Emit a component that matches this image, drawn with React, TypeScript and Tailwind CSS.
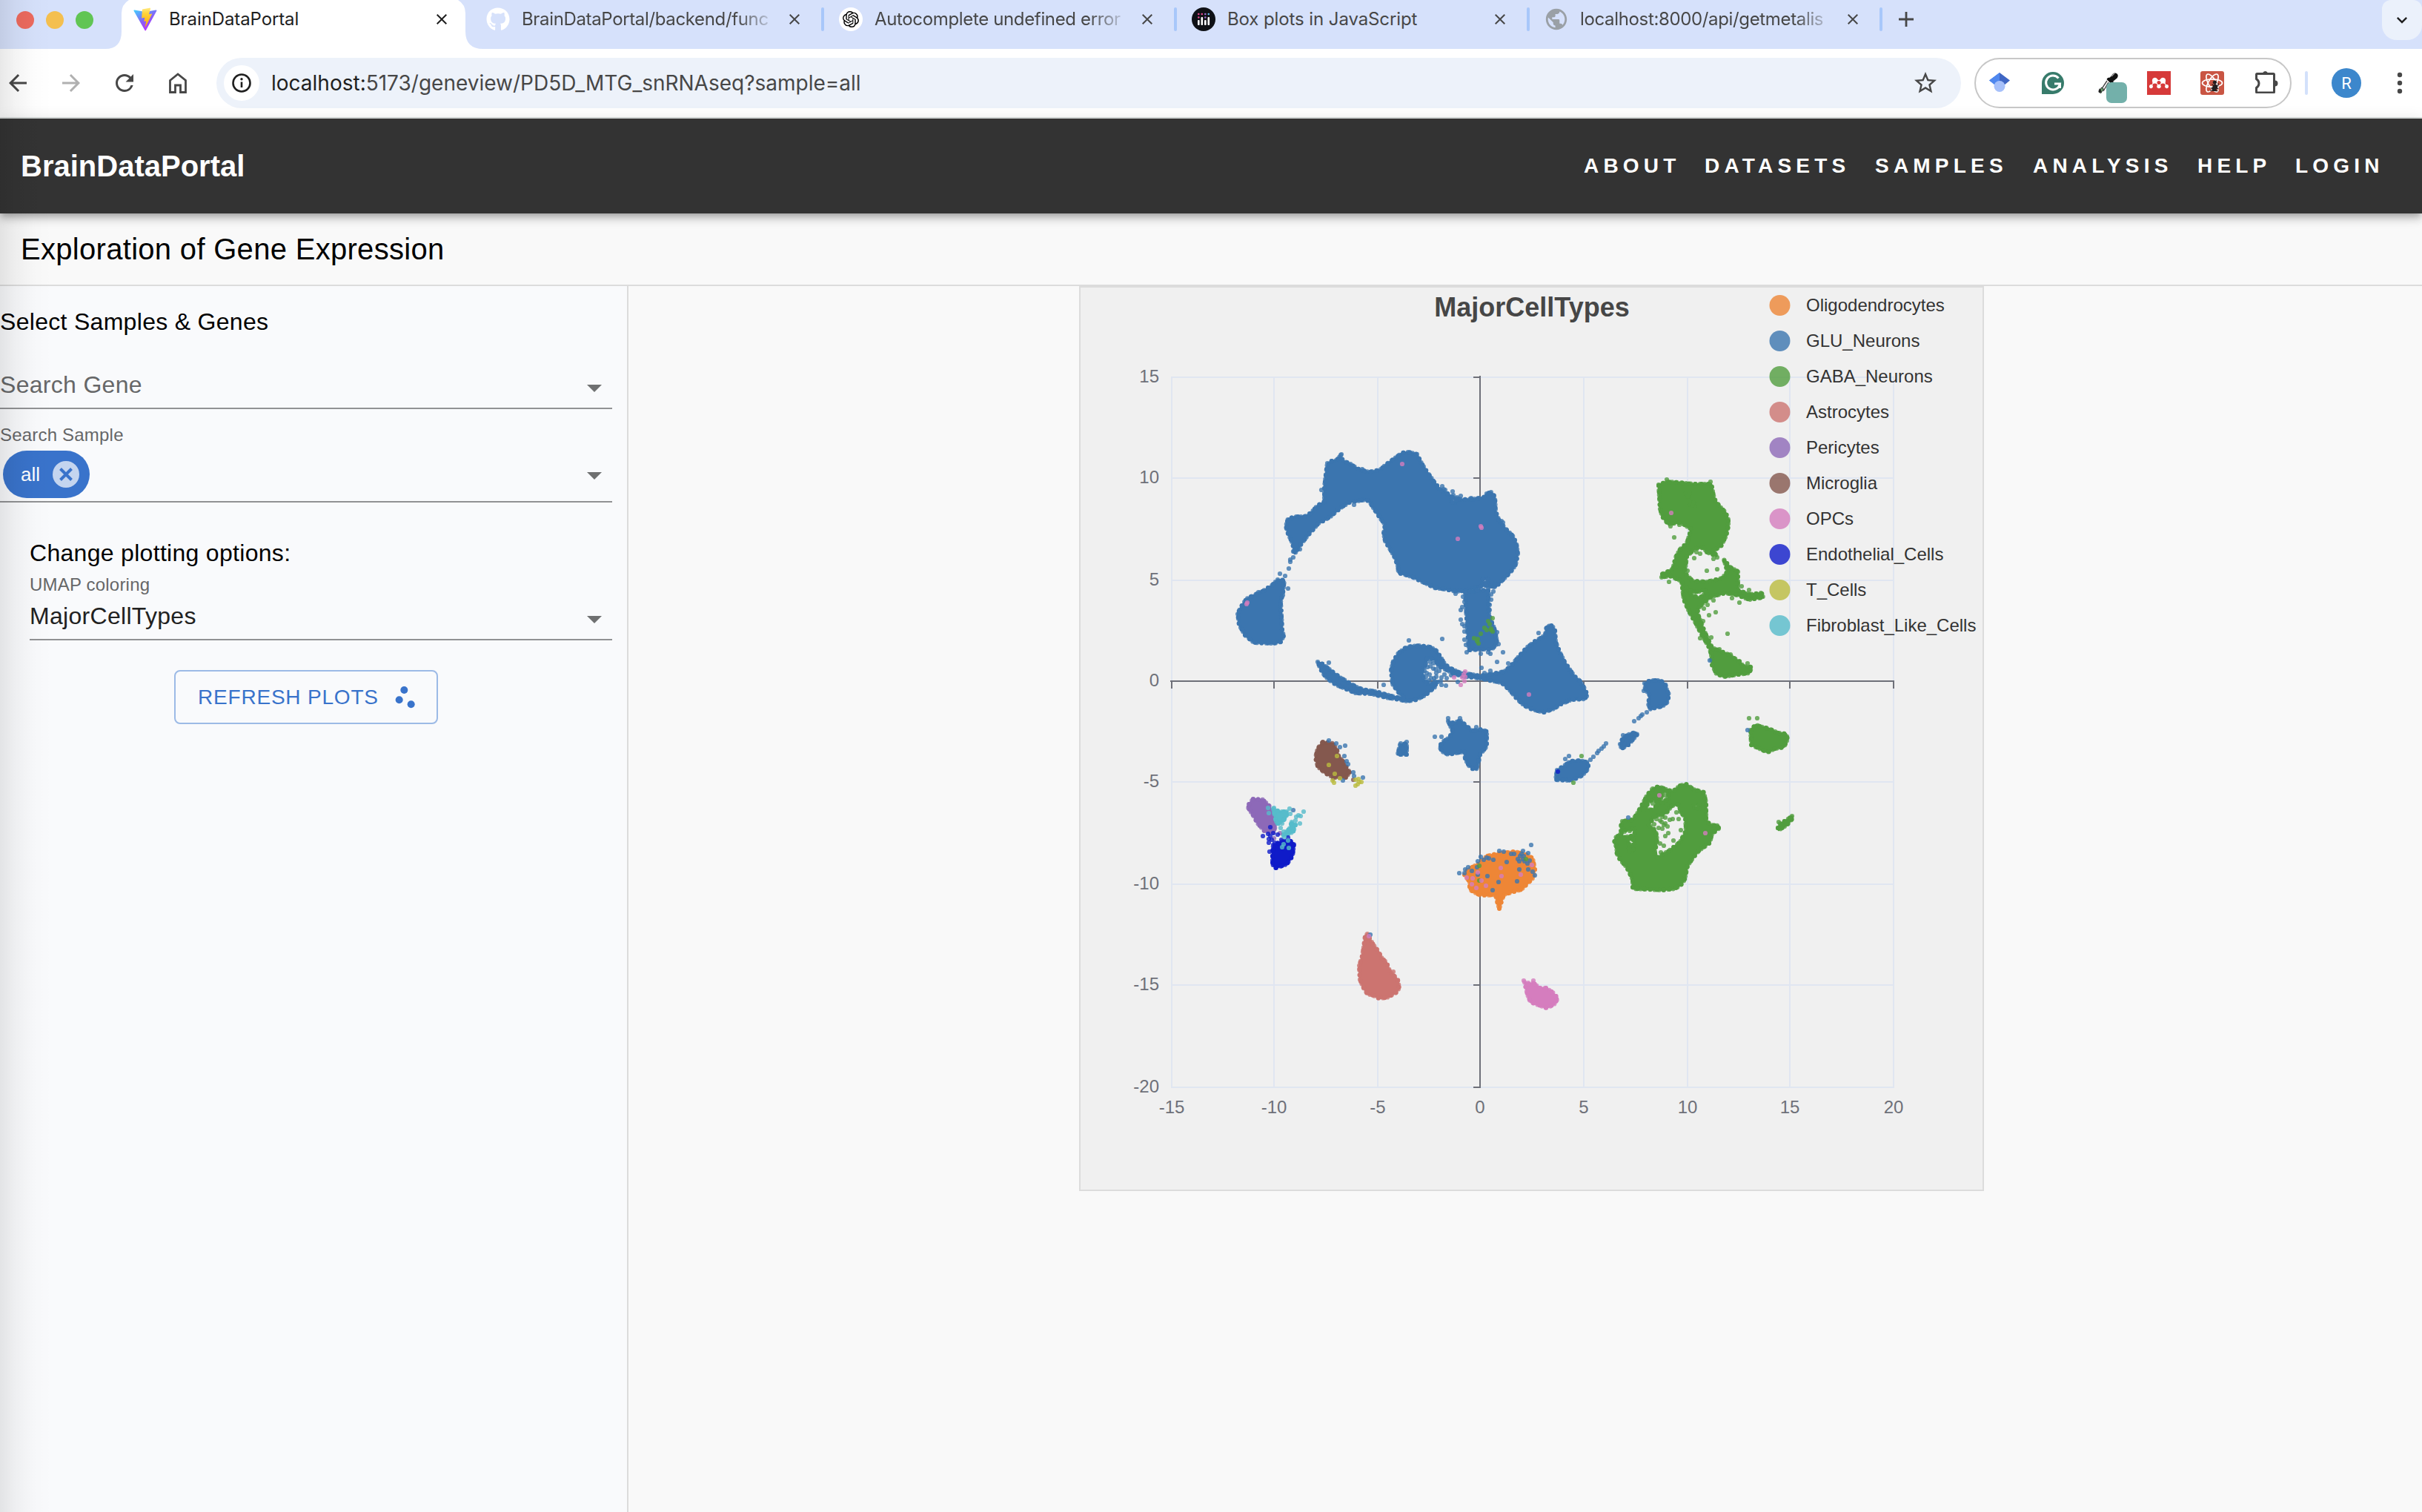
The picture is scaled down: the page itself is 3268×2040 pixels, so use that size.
import type { ReactNode } from "react";
import {
  MdArrowBack,
  MdArrowForward,
  MdClose,
  MdExpandMore,
  MdPublic,
  MdRefresh,
  MdScatterPlot,
  MdStarBorder,
} from "react-icons/md";
import { FaGithub } from "react-icons/fa";
import { SiMendeley, SiOpenai } from "react-icons/si";

/* ---------------------------------------------------------------- browser */

function ViteLogo() {
  return (
    <svg viewBox="0 0 32 32" className="h-8 w-8">
      <defs>
        <linearGradient id="vite-a" x1="0" y1="0" x2="0.6" y2="1">
          <stop offset="0" stopColor="#41d1ff" />
          <stop offset="0.6" stopColor="#8a5cf6" />
          <stop offset="1" stopColor="#bd34fe" />
        </linearGradient>
        <linearGradient id="vite-b" x1="0" y1="0" x2="0" y2="1">
          <stop offset="0" stopColor="#ffea83" />
          <stop offset="0.3" stopColor="#ffd33b" />
          <stop offset="1" stopColor="#ffa800" />
        </linearGradient>
      </defs>
      <path d="M31.3 4.7 16.9 31a.8.8 0 0 1-1.4 0L.6 4.7a.8.8 0 0 1 .9-1.2L16 6.1l14.4-2.6a.8.8 0 0 1 .9 1.2Z" fill="url(#vite-a)" />
      <path d="m22.9.5-10.600 2.100a.5.5 0 0 0-.4.400l-.7 11a.5.5 0 0 0 .6.4l3-.7c.3 0 .5.200.5.500l-.9 4.300c-.1.300.200.500.500.500l1.800-.600c.3 0 .5.200.5.500l-1.400 6.800c-.1.400.5.700.700.300l8.500-16.800c.1-.300-.100-.600-.400-.600l-3.100.600c-.3 0-.5-.200-.4-.500l2-7.300c0-.300-.200-.600-.5-.500Z" fill="url(#vite-b)" />
    </svg>
  );
}

function PlotlyLogo() {
  return (
    <svg viewBox="0 0 32 32" className="h-8 w-8">
      <circle cx="16" cy="16" r="16" fill="#0f1116" />
      <g fill="#fff">
        <rect x="8" y="17" width="2.600" height="7" rx="1" />
        <rect x="12.500" y="13" width="2.600" height="11" rx="1" />
        <rect x="17" y="17" width="2.600" height="7" rx="1" />
        <rect x="21.500" y="13" width="2.600" height="11" rx="1" />
      </g>
      <g fill="#e5478f">
        <circle cx="9.300" cy="9" r="1.300" />
        <circle cx="9.300" cy="13.500" r="1.300" />
        <circle cx="13.800" cy="9" r="1.300" />
      </g>
      <circle cx="18.300" cy="9" r="1.300" fill="#9a6bd0" />
      <circle cx="18.300" cy="13.500" r="1.300" fill="#9a6bd0" />
      <circle cx="22.800" cy="9" r="1.300" fill="#5fb8e8" />
    </svg>
  );
}

const tabs: { title: string; icon: ReactNode; active?: boolean; fade?: boolean }[] = [
  { title: "BrainDataPortal", icon: <ViteLogo />, active: true },
  { title: "BrainDataPortal/backend/func", icon: <FaGithub className="h-8 w-8 text-white" />, fade: true },
  {
    title: "Autocomplete undefined error",
    icon: (
      <span className="flex h-8 w-8 items-center justify-center rounded-full bg-white">
        <SiOpenai className="h-[22px] w-[22px] text-black" />
      </span>
    ),
    fade: true,
  },
  { title: "Box plots in JavaScript", icon: <PlotlyLogo /> },
  {
    title: "localhost:8000/api/getmetalis",
    icon: <MdPublic className="-ml-px h-[34px] w-[34px] shrink-0 text-[#9aa0a6]" />,
    fade: true,
  },
];

function TabStrip() {
  return (
    <div className="relative flex h-[66px] items-start bg-[#d6e1fb]">
      <svg className="absolute left-0 top-0 h-[66px] w-[700px]" viewBox="0 0 700 66">
        <path d="M142 66Q164 66 164 42V18Q164 6 174 0H618Q628 6 628 18V42Q628 66 652 66Z" fill="#fff" />
      </svg>
      <div className="relative flex h-[54px] w-[164px] items-center gap-4 pl-[22px]">
        <span className="h-6 w-6 rounded-full bg-[#ec6a5e]" />
        <span className="h-6 w-6 rounded-full bg-[#f4bf4f]" />
        <span className="h-6 w-6 rounded-full bg-[#61c554]" />
      </div>
      {tabs.map((t) => (
        <div key={t.title} className="relative flex h-[52px] w-[476px] items-center pl-4">
          <span className="flex w-8 shrink-0 items-center justify-center">{t.icon}</span>
          <span
            className={
              "ml-4 w-[336px] overflow-hidden whitespace-nowrap font-['Inter'] text-[24px] leading-[32px] tracking-[-0.1px] " +
              (t.active ? "text-[#1f1f1f] " : "text-[#474747] ") +
              (t.fade ? "tracking-[-0.35px] [mask-image:linear-gradient(to_right,black_290px,transparent_344px)]" : "")
            }
          >
            {t.title}
          </span>
          <MdClose className={"ml-5 h-6 w-6 shrink-0 " + (t.active ? "text-[#1f1f1f]" : "text-[#474747]")} />
          {!t.active && <span className="ml-auto mr-1 h-8 w-1 rounded-full bg-[#a8c7fa]" />}
        </div>
      ))}
      <svg viewBox="0 0 20 20" className="ml-[18px] mt-4 h-5 w-5">
        <path d="M10 0V20M0 10H20" stroke="#474747" strokeWidth="2.800" />
      </svg>
      <div className="ml-auto flex h-[54px] w-[54px] items-center justify-center rounded-b-[20px] rounded-t-[12px] bg-[#ebf1fb]">
        <MdExpandMore className="h-7 w-7 text-[#1f1f1f]" />
      </div>
    </div>
  );
}

function HomeIcon() {
  return (
    <svg viewBox="0 0 24 28" className="h-7 w-6" fill="none" stroke="#474747" strokeWidth="2.800">
      <path d="M1.500 10.500 12 2l10.500 8.500V26.500H15.500V17H8.500v9.500h-7Z" />
    </svg>
  );
}

function Extensions() {
  return (
    <div className="flex h-[68px] w-[428px] shrink-0 items-center rounded-full border-2 border-[#c7c7c7] bg-white">
      <svg viewBox="0 0 28 28" className="ml-[18px] h-7 w-7 shrink-0">
        <path d="M0 10.500 14 0v15L3 12.500Z" fill="#4f87ee" />
        <path d="M0 10.500 14 0v22Z" fill="#4f87ee" />
        <path d="M28 10.500 14 0v22Z" fill="#3f66c4" />
        <circle cx="14" cy="18.500" r="7.500" fill="#a6c0fa" />
      </svg>
      <svg viewBox="0 0 30 30" className="ml-[43px] h-[30px] w-[30px] shrink-0">
        <path d="M0 30V15A15 15 0 1 1 15 30Z" fill="#377b6b" />
        <path d="M22.500 8.500A9.500 9.500 0 1 0 24.500 16H17M24.500 15.500V22" fill="none" stroke="#fff" strokeWidth="3" />
      </svg>
      <svg viewBox="0 0 40 44" className="ml-[46px] mt-[12px] h-11 w-10 shrink-0">
        <path d="M12 13 4 25l-2 4M14 15 7 27" fill="none" stroke="#444" strokeWidth="1.400" />
        <path d="m4.500 22-3 6 2 2 4-6Z" fill="#6da36f" stroke="#111" strokeWidth=".8" />
        <path d="M13 9l3-.5 4-5q3-2 5.500 0t0 6l-5 4v3l-3 .5-6-6Z" fill="#111" />
        <path d="m18 7 4-4" stroke="#aaa" strokeWidth="1.200" />
        <rect x="11" y="15" width="28" height="28" rx="7" fill="#73b0aa" />
        <path d="M2 23q-3 6 0 6t2-3Z" fill="#222" />
      </svg>
      <span className="ml-[26px] flex h-8 w-8 shrink-0 items-center justify-center bg-[#d63a3a]">
        <SiMendeley className="h-[26px] w-[26px] text-white" />
      </span>
      <svg viewBox="0 0 32 32" className="ml-10 h-8 w-8 shrink-0">
        <rect width="32" height="32" rx="3" fill="#c95543" />
        <g fill="none" stroke="#fff" strokeWidth="1.700">
          <ellipse cx="16" cy="16" rx="13.500" ry="5.200" />
          <ellipse cx="16" cy="16" rx="13.500" ry="5.200" transform="rotate(60 16 16)" />
          <ellipse cx="16" cy="16" rx="13.500" ry="5.200" transform="rotate(120 16 16)" />
        </g>
        <g transform="rotate(25 20 21)" fill="#231f20" stroke="#231f20" strokeWidth="1.200">
          <ellipse cx="20" cy="22.500" rx="2.800" ry="4.200" />
          <circle cx="17" cy="16" r="2" />
          <path d="M14.500 20l11 2M15 25h10.500M16 28.500l8-3M22 15l1 4" />
        </g>
      </svg>
      <svg viewBox="0 0 32 32" className="-mt-1 ml-[41px] h-8 w-8 shrink-0">
        <path
          d="M2.500 6.500Q2.500 5.500 3.500 5.500H25.500Q26.500 5.500 26.500 6.500V30Q26.500 31 25.500 31H3.500Q2.500 31 2.500 30V24.500Q6 22 6 18.500T2.500 12.500Z"
          fill="none"
          stroke="#474747"
          strokeWidth="3"
        />
        <path d="M11 4.500a3.700 3.700 0 0 1 7 0ZM27.500 14.500a3.900 3.900 0 0 1 0 8Z" fill="#474747" />
      </svg>
    </div>
  );
}

function Toolbar() {
  return (
    <div className="flex h-[94px] items-center border-b-2 border-[#dde1e0] bg-white">
      <MdArrowBack className="ml-[6px] h-9 w-9 text-[#474747]" />
      <MdArrowForward className="ml-9 h-9 w-9 text-[#b0b0b0]" />
      <MdRefresh className="ml-9 h-9 w-9 text-[#474747]" />
      <span className="ml-[42px]">
        <HomeIcon />
      </span>
      <div className="ml-10 flex h-[68px] w-[2354px] shrink-0 items-center rounded-full bg-[#edf2fa] pl-[10px]">
        <span className="flex h-12 w-12 items-center justify-center rounded-full bg-white">
          <svg viewBox="0 0 26 26" className="h-[26px] w-[26px]">
            <circle cx="13" cy="13" r="11.500" fill="none" stroke="#1f1f1f" strokeWidth="2.600" />
            <path d="M13 11.500V19" stroke="#1f1f1f" strokeWidth="2.600" />
            <circle cx="13" cy="7.800" r="1.700" fill="#1f1f1f" />
          </svg>
        </span>
        <span className="ml-4 whitespace-nowrap font-['Inter'] text-[28px] leading-[40px] text-[#474747]">
          <span className="text-[#1f1f1f]">localhost:</span>5173/geneview/PD5D_MTG_snRNAseq?sample=all
        </span>
        <MdStarBorder className="ml-auto mr-[30px] h-9 w-9 text-[#474747]" />
      </div>
      <div className="ml-[18px]">
        <Extensions />
      </div>
      <span className="ml-[18px] h-8 w-1 rounded-full bg-[#d3e1fb]" />
      <span className="ml-8 flex h-10 w-10 items-center justify-center rounded-full bg-[#3c87cc] font-['Roboto'] text-[22px] text-white">
        R
      </span>
      <svg viewBox="0 0 8 30" className="ml-12 h-[30px] w-2" fill="#474747">
        <circle cx="4" cy="4" r="3.200" />
        <circle cx="4" cy="15" r="3.200" />
        <circle cx="4" cy="26" r="3.200" />
      </svg>
    </div>
  );
}

/* -------------------------------------------------------------------- app */

function NavBar() {
  return (
    <header className="relative z-10 flex h-32 items-center bg-[#333333] pl-7 text-white shadow-[0_4px_8px_-2px_rgba(0,0,0,0.2),0_8px_10px_rgba(0,0,0,0.14),0_2px_20px_rgba(0,0,0,0.12)]">
      <span className="text-[40px] font-bold">BrainDataPortal</span>
      <nav className="ml-auto flex text-[28px] font-bold tracking-[6.200px]">
        <a className="w-[163px]">ABOUT</a>
        <a className="w-[230px]">DATASETS</a>
        <a className="w-[213px]">SAMPLES</a>
        <a className="w-[222px]">ANALYSIS</a>
        <a className="w-[132px]">HELP</a>
        <a className="w-[171px]">LOGIN</a>
      </nav>
    </header>
  );
}

function Caret({ className }: { className: string }) {
  return (
    <svg viewBox="0 0 20 10" className={"ml-auto mr-[14px] h-[10px] w-5 shrink-0 " + className}>
      <path d="M0 0H20L10 10Z" fill="#6f7071" />
    </svg>
  );
}

function Sidebar() {
  return (
    <aside className="flex w-[848px] shrink-0 flex-col border-r-2 border-[#dcdcdc] bg-[#f9fafc] pr-5">
      <h2 className="mt-5 h-14 text-[32px] leading-[56px] tracking-[0.3px] text-black">Select Samples &amp; Genes</h2>
      <div className="flex h-[90px] items-end border-b-2 border-[#919294]">
        <span className="text-[32px] leading-[62px] tracking-[0.3px] text-[#666768]">Search Gene</span>
        <Caret className="mb-[21px]" />
      </div>
      <div className="border-b-2 border-[#919294] pb-1 pt-[17px]">
        <div className="text-[24px] leading-9 tracking-[0.2px] text-[#666768]">Search Sample</div>
        <div className="mt-[3px] flex h-16 items-center pl-1">
          <span className="flex h-16 w-[117px] items-center rounded-full bg-[#3973cb] pl-6 text-[26px] text-white">
            all
            <span className="ml-auto mr-[14px] flex h-9 w-9 items-center justify-center rounded-full bg-[#c4d5ef]">
              <svg viewBox="0 0 18 18" className="h-[18px] w-[18px]">
                <path d="M1.500 1.500l15 15M16.500 1.500l-15 15" stroke="#3973cb" strokeWidth="4" />
              </svg>
            </span>
          </span>
          <Caret className="mt-[3px]" />
        </div>
      </div>
      <div className="ml-10 flex flex-col">
        <h3 className="mt-11 h-12 text-[32px] leading-[48px] tracking-[0.3px] text-black">Change plotting options:</h3>
        <div className="mt-px text-[24px] leading-9 tracking-[0.2px] text-[#666768]">UMAP coloring</div>
        <div className="flex h-[57px] items-start border-b-2 border-[#919294] text-[32px] leading-[48px] tracking-[0.3px] text-[#212121]">
          MajorCellTypes
          <Caret className="mt-6" />
        </div>
      </div>
      <button className="ml-[235px] mt-10 flex h-[73px] w-[356px] items-center rounded-lg border-2 border-[#9cbae6] pl-[30px] text-[28px] tracking-[0.02857em] text-[#3973cb]">
        REFRESH PLOTS
        <MdScatterPlot className="ml-auto mr-[22px] h-10 w-10" />
      </button>
    </aside>
  );
}

/* ------------------------------------------------------------------ chart */

const C = {
  oligo: "#ee8636",
  glu: "#3b75af",
  gaba: "#519d3e",
  astro: "#cc7470",
  peri: "#8d69b8",
  micro: "#84584e",
  opc: "#d57dbe",
  endo: "#0f1bc9",
  tcell: "#babc3f",
  fibro: "#56bccb",
};

const legend = [
  ["Oligodendrocytes", C.oligo],
  ["GLU_Neurons", C.glu],
  ["GABA_Neurons", C.gaba],
  ["Astrocytes", C.astro],
  ["Pericytes", C.peri],
  ["Microglia", C.micro],
  ["OPCs", C.opc],
  ["Endothelial_Cells", C.endo],
  ["T_Cells", C.tcell],
  ["Fibroblast_Like_Cells", C.fibro],
];

/* Dense cell clusters: outline rings (inner rings are gaps in the cloud). */
const regions: { color: string; d: string }[] = [
  {
    color: C.glu,
    d: "M1791 625L1797 622 1803 621 1808 616 1813 622 1822 626 1833 633 1847 637 1862 634 1870 627 1885 616 1892 611 1901 610 1912 613 1918 625 1925 636 1932 646 1942 660 1953 666 1962 672 1973 674 1990 673 2002 671 2006 666 2012 664 2017 670 2018 690 2023 703 2032 714 2041 723 2046 733 2048 747 2045 762 2038 772 2027 783 2018 792 2004 790 1990 793 1975 797 1965 798 1950 795 1935 793 1926 788 1917 784 1905 778 1895 775 1887 773 1886 763 1881 750 1875 740 1869 730 1867 720 1869 708 1863 700 1853 685 1848 677 1843 674 1832 676 1822 677 1812 683 1803 690 1795 697 1787 702 1779 706 1773 713 1764 723 1755 735 1747 747 1744 733 1738 720 1735 710 1738 700 1748 697 1760 697 1769 692 1778 682 1787 677 1787 657 1789 640Z M1959 673l6 1-1 5-6-2Z M2001 781l8 1-4 5-5-1Z",
  },
  { color: C.glu, d: "M1724 782L1733 783 1731 800 1728 812 1729 830 1730 850 1732 858 1728 866 1718 868 1692 867 1680 857 1672 843 1670 828 1675 818 1682 808 1690 804 1703 798 1716 790Z" },
  { color: C.glu, d: "M1977 798L2008 796 2009 830 2017 850 2020 868 2013 876 1998 876 1982 877 1980 850 1978 820Z M1990 794h4v3h-4Z" },
  {
    color: C.glu,
    d: "M1778 893L1785 896 1796 905 1808 914 1820 921 1832 928 1843 931 1856 933 1870 937 1885 941 1894 941 1887 934 1879 923 1877 904 1880 892 1887 881 1898 873 1914 871 1930 873 1938 878 1944 887 1950 897 1958 902 1968 907 1980 909 1997 912 2015 909 2030 906 2040 897 2050 885 2060 874 2070 866 2085 857 2087 845 2094 844 2098 850 2099 866 2105 881 2111 893 2124 912 2132 919 2138 929 2142 938 2138 943 2120 944 2106 950 2097 956 2083 961 2067 957 2057 952 2047 943 2037 931 2026 921 2010 918 1997 915 1977 913 1962 909 1950 903 1942 899 1936 890 1926 887 1924 896 1919 905 1921 917 1930 924 1938 921 1936 927 1923 938 1911 944 1899 946 1883 943 1870 941 1850 936 1829 935 1815 929 1803 924 1793 917 1787 911 1782 903Z",
  },
  { color: C.glu, d: "M1954 973L1962 976 1970 972 1977 978 1986 986 1999 984 2006 987 2006 1007 1997 1018 1995 1028 1992 1038 1988 1038 1982 1033 1977 1024 1976 1014 1954 1018 1946 1014 1942 1007 1948 1000 1956 995 1960 986Z" },
  { color: C.glu, d: "M1889 1005L1898 1003 1898 1018 1886 1018Z" },
  { color: C.glu, d: "M2101 1039L2111 1033 2119 1027 2132 1026 2143 1029 2143 1037 2135 1046 2125 1051 2117 1053 2099 1052Z" },
  { color: C.glu, d: "M2186 1004L2190 995 2200 990 2207 988 2209 991 2203 998 2197 1005 2188 1010Z" },
  { color: C.glu, d: "M2219 922L2227 918 2240 918 2247 923 2249 931 2252 937 2250 947 2243 953 2233 955 2227 957 2224 950 2226 938 2220 930Z" },
  {
    color: C.gaba,
    d: "M2238 654L2249 650 2266 651 2284 653 2309 653 2313 673 2320 683 2328 691 2332 701 2332 710 2329 723 2322 737 2312 743 2316 750 2303 745 2299 739 2287 740 2276 751 2273 773 2284 784 2303 785 2324 780 2331 771 2326 755 2334 765 2345 771 2345 796 2360 802 2377 800 2379 806 2360 809 2345 803 2328 800 2309 805 2299 813 2293 819 2290 826 2299 850 2310 874 2330 882 2340 888 2348 893 2352 899 2364 900 2360 908 2345 910 2326 913 2316 909 2310 897 2309 884 2307 875 2296 856 2287 839 2279 825 2272 809 2269 784 2253 777 2242 779 2242 775 2257 768 2261 752 2267 741 2276 733 2282 714 2268 705 2251 707 2243 697 2240 687Z M2276 793L2284 799 2294 798 2302 795 2301 801 2293 807 2283 803Z M2275 665l5-1-2 8Z M2281 681l4-4 2 6Z",
  },
  { color: C.gaba, d: "M2362 985L2369 978 2378 981 2387 983 2399 989 2410 990 2412 997 2407 1008 2395 1010 2385 1015 2372 1009 2363 1005Z" },
  { color: C.gaba, d: "M2402 1111L2410 1107 2418 1101 2419 1104 2411 1113 2400 1120 2399 1117Z" },
  {
    color: C.gaba,
    d: "M2230 1064L2238 1061 2248 1065 2257 1068 2267 1060 2275 1058 2285 1065 2299 1069 2302 1083 2302 1107 2308 1113 2319 1114 2319 1118 2310 1125 2307 1137 2292 1148 2284 1158 2277 1168 2273 1187 2268 1194 2260 1199 2243 1201 2225 1200 2203 1199 2203 1187 2195 1170 2186 1160 2181 1150 2182 1144 2178 1137 2180 1130 2186 1126 2188 1121 2187 1115 2189 1108 2203 1106 2209 1098 2215 1087 2223 1072Z M2225 1113L2232 1102 2248 1097 2256 1087 2266 1085 2267 1095 2274 1103 2275 1121 2267 1136 2252 1148 2234 1158 2233 1149 2236 1133 2234 1121Z M2222 1092L2223 1082 2233 1078 2236 1083 2232 1093Z M2243 1070L2251 1066 2251 1078 2240 1083Z M2187 1121L2205 1118 2206 1127 2190 1130Z M2197 1133l8 0 1 6-8 2Z M2286 1086l7 0 0 5-6-1Z M2198 1145l6 0 0 4-5 0Z",
  },
  { color: C.micro, d: "M1785 1001L1798 1003 1804 1012 1806 1020 1812 1027 1816 1034 1821 1042 1816 1049 1800 1049 1788 1043 1778 1034 1775 1022 1778 1010Z" },
  { color: C.peri, d: "M1691 1078L1704 1079 1713 1088 1718 1100 1722 1112 1718 1123 1707 1122 1697 1111 1691 1100 1683 1088Z" },
  { color: C.endo, d: "M1718 1140L1728 1136 1740 1134 1746 1138 1744 1155 1736 1166 1721 1171 1717 1166 1717 1150Z" },
  { color: C.fibro, d: "M1718 1091L1726 1095 1737 1095 1735 1104 1724 1112 1721 1105Z" },
  { color: C.fibro, d: "M1743 1109L1748 1113 1745 1122 1738 1126 1731 1127 1740 1118Z" },
  { color: C.oligo, d: "M1976 1180L1981 1173 1988 1169 1997 1165 2006 1155 2015 1153 2026 1151 2044 1149 2059 1153 2068 1158 2071 1173 2068 1185 2061 1192 2053 1200 2039 1204 2029 1207 2025 1219 2023 1226 2020 1216 2018 1207 2005 1208 1995 1207 1983 1200 1983 1190Z" },
  { color: C.astro, d: "M1845 1260L1849 1268 1854 1276 1860 1284 1864 1292 1871 1299 1875 1310 1886 1322 1888 1333 1883 1340 1871 1346 1861 1347 1853 1343 1845 1341 1840 1333 1835 1322 1834 1303 1838 1290 1840 1278 1842 1263Z" },
  { color: C.opc, d: "M2057 1325L2062 1328 2069 1326 2077 1333 2086 1333 2095 1339 2102 1347 2097 1355 2087 1360 2076 1356 2065 1352 2061 1342Z" },
];

/* Individual cells, as flat x,y lists. */
const cells: { color: string; at: number[] }[] = [
  {
    color: C.glu,
    at: [
      1901, 864, 1946, 862, 2076, 854, 1727, 774, 1734, 777, 1739, 767, 1741, 758, 1741, 755, 1745, 752, 1738, 794, 1731, 803, 1698, 799,
      1783, 661, 1827, 681, 1838, 633, 1810, 613, 1809, 614, 1971, 823, 1973, 819, 2012, 809, 2010, 816, 1971, 836, 2028, 880, 2022, 869,
      2020, 853, 2011, 882, 1998, 882, 1979, 880, 1976, 863, 1976, 852, 1964, 801, 2015, 798, 2008, 793, 1867, 924, 2020, 893, 1999, 901,
      2035, 895, 2011, 905, 2003, 908, 2008, 880, 1936, 994, 1945, 994, 1992, 981, 1954, 969, 1970, 969, 2117, 1020, 2112, 1024, 2146, 1025,
      2150, 1021, 2155, 1016, 2157, 1013, 2161, 1010, 2164, 1007, 2167, 1003, 2205, 973, 2211, 969, 2214, 966, 2216, 964, 2222, 961,
      1930, 893, 1926, 900, 1934, 902, 1938, 908, 1929, 910, 1924, 913, 1935, 915, 1945, 914, 1942, 905, 1922, 905, 1949, 910, 1952, 915,
      1940, 920, 1933, 922, 1928, 918, 1967, 920, 1951, 925, 1958, 911, 1960, 905, 1945, 924, 1962, 911, 1942, 660, 1946, 656, 1950, 661,
      1948, 660, 1960, 663, 1961, 668, 1966, 671, 1971, 669, 1985, 672, 1890, 1003, 1898, 1001, 2218, 932, 2190, 992, 1793, 894, 1974, 805,
      1976, 812, 2012, 802, 1745, 744, 1749, 742, 1754, 741, 1987, 798, 2026, 703, 2028, 705, 2040, 722, 2307, 891, 2358, 985,
      2197, 1103, 1745, 1093, 1930, 899, 1934, 895, 1937, 903, 1944, 919, 1938, 913, 1941, 899, 1936, 919, 1925, 908, 1931, 915,
      1935, 651, 1939, 655, 1976, 845, 1973, 842, 1978, 870, 2019, 861, 2012, 845, 2010, 823, 2017, 787, 2012, 791,
    ],
  },
  {
    color: C.gaba,
    at: [
      2259, 725, 2286, 753, 2303, 770, 2317, 768, 2317, 752, 2350, 791, 2360, 796, 2347, 813, 2337, 807, 2331, 855, 2315, 826, 2306, 830,
      2312, 810, 2304, 816, 2294, 861, 2309, 860, 2252, 785, 2277, 770, 2358, 895, 2360, 969, 2371, 969, 2235, 1105, 2243, 1102, 2247, 1103,
      2257, 1105, 2265, 1105, 2242, 1109, 2247, 1111, 2250, 1115, 2232, 1112, 2238, 1117, 2243, 1118, 2251, 1124, 2247, 1128, 2258, 1134,
      2268, 1120, 2245, 1141, 2240, 1138, 2241, 1150, 2192, 1122, 2199, 1121, 2230, 1084, 2236, 1085, 2243, 1083, 2247, 1073, 2400, 1109,
      2014, 834, 2008, 838, 2010, 842, 2003, 847, 2006, 850, 2012, 848, 2014, 852, 2012, 850, 1998, 855, 1989, 861, 1994, 862, 1993, 865,
      1995, 868, 2134, 1020, 2123, 1056, 2254, 710, 2266, 708, 2261, 765, 2299, 821, 2298, 838, 2320, 876, 2335, 883, 2289, 745, 2294, 747,
      2312, 754, 2249, 647, 2308, 650, 2262, 1096, 2240, 1107, 2253, 1106, 2245, 1113,
    ],
  },
  { color: C.micro, at: [1826, 1052, 1799, 1050] },
  { color: C.astro, at: [1880, 1311] },
  {
    color: C.glu,
    at: [
      1793, 999, 1803, 1003, 1808, 1008, 1815, 1006, 1814, 1020, 1817, 1027, 1819, 1031, 1826, 1042, 1827, 1047, 1839, 1049, 1812, 1053,
      1969, 1178, 1977, 1173, 1981, 1170, 1976, 1178, 1986, 1175, 1993, 1170, 1994, 1162, 1998, 1156, 2002, 1160, 2006, 1157, 2009, 1158,
      2015, 1160, 1994, 1180, 2007, 1182, 2022, 1190, 2014, 1201, 2023, 1148, 2029, 1149, 2039, 1152, 2043, 1152, 2033, 1163, 2050, 1173,
      2047, 1189, 2055, 1148, 2053, 1152, 2051, 1155, 2056, 1155, 2062, 1151, 2050, 1162, 2057, 1162, 2064, 1161, 2066, 1140, 2062, 1173,
      2068, 1176, 2071, 1181, 2061, 1165, 1849, 1261, 2055, 1159, 2048, 1159,
    ],
  },
  { color: C.peri, at: [1727, 1124, 1719, 1131] },
  { color: C.endo, at: [1704, 1128, 1711, 1125, 1718, 1124, 1724, 1126, 1712, 1132, 1712, 1137, 1716, 1133, 1714, 1116, 1713, 1149, 1720, 1137, 1729, 1133, 1714, 1128, 1738, 1130, 2102, 1041] },
  {
    color: C.fibro,
    at: [
      1711, 1090, 1712, 1097, 1719, 1090, 1740, 1091, 1759, 1095, 1755, 1101, 1749, 1102, 1741, 1098, 1754, 1111, 1748, 1107, 1728, 1117,
      1732, 1139, 1730, 1143, 1739, 1144, 1738, 1134, 1752, 1100, 1730, 1111, 1722, 1108, 1732, 1122, 1733, 1129, 1744, 1117,
    ],
  },
  { color: C.tcell, at: [1804, 1020, 1793, 1032, 1801, 1044, 1808, 1050, 1798, 1053, 1800, 1056, 1829, 1052, 1833, 1051, 1837, 1055, 1832, 1058, 1829, 1060, 1834, 1055] },
  { color: C.gaba, at: [1996, 1168, 1996, 1188, 2059, 1159] },
  {
    color: C.opc,
    at: [
      2025, 1171, 2026, 1182, 2052, 1180, 2067, 1167, 1994, 1177, 1979, 1184, 1987, 1185, 1986, 1193, 1992, 1198, 1999, 1188, 2005, 1195,
      1892, 626, 1998, 710, 1999, 712, 1967, 727, 1683, 813, 1682, 815, 2063, 937, 1977, 906, 1962, 914, 1971, 924, 1975, 910, 1973, 914,
      1977, 913, 1976, 919, 2255, 692, 2239, 1073, 2301, 1124, 1847, 1263, 2056, 1323, 2062, 1326, 2069, 1323,
    ],
  },
];

const xTicks = [
  [-15, 1581],
  [-10, 1719],
  [-5, 1859],
  [0, 1997],
  [5, 2137],
  [10, 2277],
  [15, 2415],
  [20, 2555],
];
const yTicks = [
  [15, 509],
  [10, 645],
  [5, 783],
  [0, 919],
  [-5, 1055],
  [-10, 1193],
  [-15, 1329],
  [-20, 1467],
];

function pairs(flat: number[]) {
  const out: [number, number][] = [];
  for (let i = 0; i < flat.length; i += 2) out.push([flat[i], flat[i + 1]]);
  return out;
}

function UmapChart() {
  return (
    <div className="h-[1221px] w-[1221px] border-2 border-[#dcdcdc] bg-[#f0f0f0]">
      <svg viewBox="1458 388 1217 1217" className="h-[1217px] w-[1217px] font-['Liberation_Sans']">
        <g stroke="#e0e6f1" strokeWidth="2">
          {xTicks.map(([v, x]) => (
            <line key={v} x1={x} x2={x} y1="508" y2="1468" />
          ))}
          {yTicks.map(([v, y]) => (
            <line key={v} x1="1580" x2="2556" y1={y} y2={y} />
          ))}
        </g>
        <g stroke="#6e7079" strokeWidth="2">
          <path d="M1579 919H2556M1997 507V1468" />
          {xTicks.map(([v, x]) => (
            <line key={v} x1={x} x2={x} y1="919" y2="929" />
          ))}
          {yTicks.map(([v, y]) => (
            <line key={v} x1="1988" x2="1997" y1={y} y2={y} />
          ))}
        </g>
        <g fill="#6e7079" fontSize="24">
          {xTicks.map(([v, x]) => (
            <text key={v} x={x} y="1502" textAnchor="middle">
              {v}
            </text>
          ))}
          {yTicks.map(([v, y]) => (
            <text key={v} x="1564" y={y + 7} textAnchor="end">
              {v}
            </text>
          ))}
        </g>
        {regions.map((r, i) => (
          <g key={i} fill={r.color} stroke={r.color} strokeLinecap="round" fillRule="evenodd">
            <path d={r.d} strokeWidth="2.500" strokeLinejoin="round" />
            <path d={r.d} fill="none" strokeWidth="6.200" strokeDasharray="0 6.300" opacity="0.8" />
            <path d={r.d} fill="none" strokeWidth="6" strokeDasharray="0 8.700" strokeDashoffset="2" />
          </g>
        ))}
        {cells.map((s, i) => (
          <g key={i} fill={s.color}>
            {pairs(s.at).map(([x, y], j) => (
              <circle key={j} cx={x} cy={y} r="3.100" fillOpacity="0.8" />
            ))}
          </g>
        ))}
        <text x="2067" y="426.500" textAnchor="middle" fontSize="36" fontWeight="700" fill="#464646">
          MajorCellTypes
        </text>
        {legend.map(([name, color], i) => (
          <g key={name}>
            <circle cx="2401.500" cy={412 + i * 48} r="14" fill={color} fillOpacity="0.8" />
            <text x="2437" y={420 + i * 48} fontSize="24" fill="#333">
              {name}
            </text>
          </g>
        ))}
      </svg>
    </div>
  );
}

export default function App() {
  return (
    <div className="relative flex h-[2040px] w-[3268px] flex-col overflow-hidden bg-[#f9f9f9] font-['Liberation_Sans',sans-serif]">
      <TabStrip />
      <Toolbar />
      <NavBar />
      <div className="flex h-[98px] items-center border-b-2 border-[#dcdcdc] pl-7">
        <h1 className="text-[40px] tracking-[0.0075em] text-black">Exploration of Gene Expression</h1>
      </div>
      <div className="flex grow">
        <Sidebar />
        <main className="pl-[608px]">
          <UmapChart />
        </main>
      </div>
      <div className="pointer-events-none absolute inset-y-0 left-0 z-20 w-[70px] bg-[linear-gradient(to_right,rgba(0,0,0,0.09),rgba(0,0,0,0.045)_30%,rgba(0,0,0,0.012)_65%,transparent)]" />
    </div>
  );
}
